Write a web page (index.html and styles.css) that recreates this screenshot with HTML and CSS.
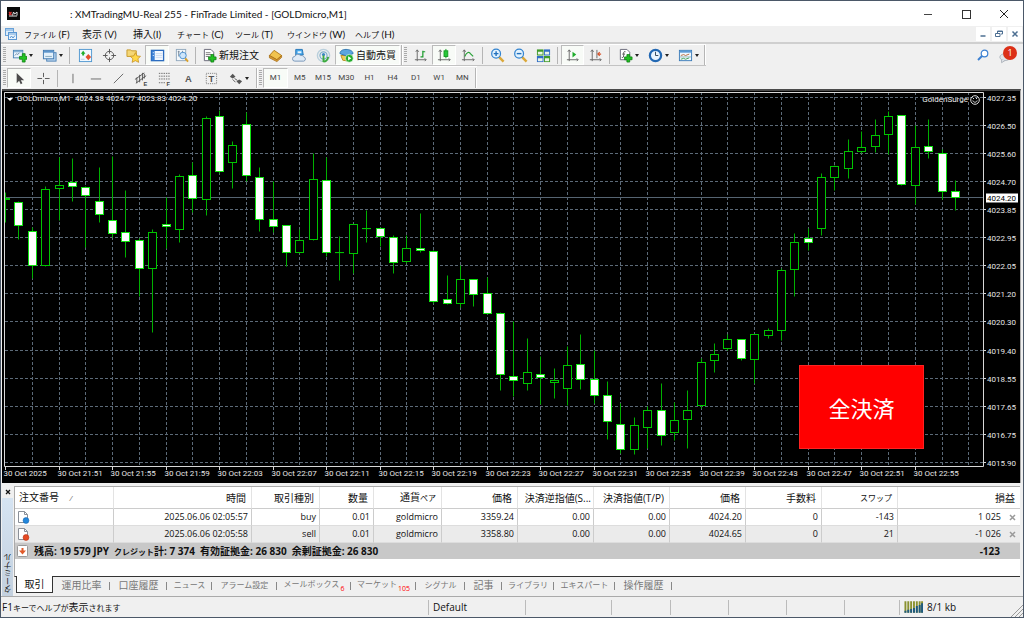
FILE: index.html
```html
<!DOCTYPE html>
<html lang="ja">
<head>
<meta charset="utf-8">
<meta name="viewport" content="width=device-width, initial-scale=1">
<title>XMTradingMU-Real 255 - FinTrade Limited - [GOLDmicro,M1]</title>
<link rel="stylesheet" href="styles.css">
</head>
<body>
<header class="titlebar">
  <svg class="logo" viewBox="0 0 13 13"><rect width="13" height="13" fill="#0a0a0a"/><path d="M2 5l2.500 3M4.500 5L2 8" stroke="#d33" stroke-width="1.200"/><path d="M5.500 8.500L6.500 5l1.200 2L10 5v3.500M2 9h8" stroke="#ddd" fill="none"/></svg>
  <h1>: XMTradingMU-Real 255 - FinTrade Limited - [GOLDmicro,M1]</h1>
  <div class="winbtns">
    <button aria-label="最小化"><svg viewBox="0 0 10 10"><path d="M1 5.500h8" stroke="#444"/></svg></button>
    <button aria-label="最大化"><svg viewBox="0 0 10 10"><rect x="1.500" y="1.500" width="8" height="8" stroke="#333" fill="none"/></svg></button>
    <button aria-label="閉じる"><svg viewBox="0 0 10 10"><path d="M1 1l8 8M9 1L1 9" stroke="#222"/></svg></button>
  </div>
</header>

<nav class="menubar">
  <svg class="doc" viewBox="0 0 12 12"><rect x=".5" y=".5" width="8" height="7" fill="#dcecfa" stroke="#6aa2d8"/><path d="M1 2h7" stroke="#6aa2d8"/><rect x="3.500" y="4.500" width="8" height="7" fill="#eaf4fd" stroke="#5b97d2"/><path d="M4 6h7" stroke="#6aa2d8"/><path d="M5 10l1.500-2 1.500 2 2-2.500" stroke="#5b97d2" fill="none"/></svg>
  <button class="m1"><span class="kana">ファイル</span> (F)</button>
  <button class="m2">表示 (V)</button>
  <button class="m3">挿入(I)</button>
  <button class="m4"><span class="kana">チャート</span> (C)</button>
  <button class="m5"><span class="kana">ツール</span> (T)</button>
  <button class="m6"><span class="kana">ウインドウ</span> (W)</button>
  <button class="m7"><span class="kana">ヘルプ</span> (H)</button>
  <div class="mdi">
    <button aria-label="チャート最小化"><svg viewBox="0 0 8 8"><path d="M1.500 6h5" stroke="#4d6f92" stroke-width="1.500"/></svg></button>
    <button aria-label="元に戻す"><svg viewBox="0 0 8 8"><path d="M2.500 3V1h5v3H6M2 1.500h5.500" stroke="#4d6f92" fill="none"/><path d="M.5 3.500h4.500v3H.5z" stroke="#4d6f92" fill="#fff"/></svg></button>
    <button aria-label="チャートを閉じる"><svg viewBox="0 0 8 8"><path d="M1.500 1.500l5 5M6.500 1.500l-5 5" stroke="#4d6f92" stroke-width="1.500"/></svg></button>
  </div>
</nav>

<div class="toolrow">
  <div class="toolbar">
    <i class="grip"></i>
    <button class="drop" aria-label="新規チャート"><svg viewBox="0 0 16 16"><rect x="1.500" y="2.500" width="10" height="8" fill="#e9f3fc" stroke="#4d86b8"/><path d="M2 4h9" stroke="#5d96c8"/><path d="M3 8l2-2 1 1 2-2" stroke="#68a" fill="none"/><path d="M8 9h3V6h3v3h2v3h-2v3h-3v-3H8z" fill="#22c322" stroke="#0b7b10" stroke-width=".8"/></svg></button>
    <button class="drop" aria-label="プロファイル"><svg viewBox="0 0 16 16"><rect x="5" y="5" width="10" height="9" fill="#b9d5ef" stroke="#4e82b5"/><rect x="1.500" y="2.500" width="11" height="9" fill="#e3f0fb" stroke="#3f78b0"/><path d="M2 4h10" stroke="#5c95cb" stroke-width="2"/><path d="M3.500 9h7" stroke="#8ab"/></svg></button>
    <i class="sep"></i>
    <button aria-label="気配値表示"><svg viewBox="0 0 16 16"><rect x="1.500" y="1.500" width="13" height="13" fill="#f2f9ff" stroke="#4f97d0"/><path d="M3 6l2.500-3L8 6 6.500 6v2h-2V6z" fill="#1fae2c"/><path d="M8 9.500l3-3 3 3-3 3.500z" fill="#e5502d"/><path d="M3 12h4" stroke="#bcd"/></svg></button>
    <button aria-label="データウインドウ"><svg viewBox="0 0 16 16"><circle cx="8" cy="8" r="4.500" fill="none" stroke="#555"/><path d="M8 1v5M8 10v5M1 8h5M10 8h5" stroke="#555"/></svg></button>
    <button aria-label="ナビゲーター"><svg viewBox="0 0 16 16"><path d="M1 2h4l1 1h5v6H1z" fill="#f5d777" stroke="#c79a2b"/><path d="M10 5l1.700 3.400 3.800.5-2.800 2.600.8 3.800L10 13.500l-3.500 1.800.8-3.800-2.800-2.600 3.800-.5z" fill="#ffd84a" stroke="#c58f1d" stroke-width=".8"/></svg></button>
    <button class="on" aria-label="ターミナル"><svg viewBox="0 0 16 16"><rect x="1.500" y="2.500" width="13" height="11" fill="#f3f8fe" stroke="#2c6cc0" stroke-width="1.400"/><path d="M2 3h3v10H2z" fill="#3b80d6"/><path d="M6 6h7M6 8h7M6 10h7" stroke="#bcd0ea" stroke-width=".7"/><path d="M3 5h1M3 8h1" stroke="#fff"/></svg></button>
    <button aria-label="ストラテジーテスター"><svg viewBox="0 0 16 16"><rect x="2.500" y="1.500" width="10" height="12" fill="#f4f8fb" stroke="#90a8bd"/><path d="M4 4h2M5 3v6M9 3v3" stroke="#789"/><circle cx="9.500" cy="8" r="3.500" fill="#cfe6fa" stroke="#4b8fcf"/><path d="M12 11l3 3.500" stroke="#d9a02b" stroke-width="2"/></svg></button>
    <i class="sep"></i>
    <button class="text order"><svg viewBox="0 0 16 16"><path d="M2.500 1.500h7l3 3v9h-10z" fill="#fff" stroke="#667"/><path d="M4 5h5M4 7h6M4 9h4" stroke="#777"/><path d="M7 9.500h2.500V7h3v2.500H15v3h-2.500V15h-3v-2.500H7z" fill="#21c021" stroke="#0b7b10" stroke-width=".8"/></svg>新規注文</button>
    <button aria-label="メタエディター"><svg viewBox="0 0 16 16"><path d="M1.500 8l5-5.500 8 5.500-5 4.500z" fill="#f1c34e" stroke="#b07a1c"/><path d="M1.500 8v2.500l8 4 5-4.500V8l-5 4.500z" fill="#d89a2e" stroke="#a46b14" stroke-width=".8"/></svg></button>
    <button aria-label="VPS"><svg viewBox="0 0 16 16"><path d="M4 1.500h7l1 6H4z" fill="#49a8ea" stroke="#2375b8"/><path d="M6 3.500h4v2H6z" fill="#e8f5ff"/><path d="M3 14a2.500 2.500 0 010-5 3.500 3.500 0 016-1 3 3 0 013.500 1.500 2.300 2.300 0 010 4.500z" fill="#dfeaf5" stroke="#7796b8"/></svg></button>
    <button aria-label="シグナル"><svg viewBox="0 0 16 16" fill="none"><circle cx="8" cy="8" r="6.500" stroke="#b9cfdc" stroke-width="1.500"/><circle cx="8" cy="8" r="3.800" stroke="#7dadcb" stroke-width="1.300"/><circle cx="8" cy="7" r="1.700" fill="#3b86c4"/><path d="M8 8v7M8 14.500c3 0 4.500-2 5-5" stroke="#3cab3d" stroke-width="2"/></svg></button>
    <button class="text auto on"><svg viewBox="0 0 16 16"><path d="M2 8l2 5 6 1 4-6z" fill="#f0cc54" stroke="#b98c22"/><path d="M1 6c0-3 3-4.500 6.500-4.500S15 3 15 6L8 8.500z" fill="#5ba5de" stroke="#2f75af"/><circle cx="11" cy="11" r="4.200" fill="#22ad2b" stroke="#fff" stroke-width=".6"/><path d="M9.700 8.800l3.500 2.200-3.500 2.200z" fill="#fff"/></svg>自動売買</button>
    <i class="edge"></i><i class="grip"></i>
    <button aria-label="バーチャート"><svg viewBox="0 0 16 16"><path d="M4.500 2v12M2 12.500h12M3 4l1.500-2L6 4M12.500 11l1.500 1.500-1.500 1.500" fill="none" stroke="#666"/><path d="M10.500 3v7M8 9.500h2.500M10.500 4H13" stroke="#1b9b2c" stroke-width="1.300"/></svg></button>
    <button class="on" aria-label="ローソク足"><svg viewBox="0 0 16 16"><path d="M3.500 2v12M1 12.500h13M2 4l1.500-2L5 4M12.500 11l1.500 1.500-1.500 1.500" fill="none" stroke="#666"/><path d="M9.500 1v10" stroke="#129b20"/><rect x="7.500" y="3" width="4" height="6" fill="#28c838" stroke="#129b20"/></svg></button>
    <button aria-label="ラインチャート"><svg viewBox="0 0 16 16"><path d="M3.500 2v12M1 12.500h13M2 4l1.500-2L5 4M12.500 11l1.500 1.500-1.500 1.500" fill="none" stroke="#666"/><path d="M4 9c2-5 5-5 6-3l3 3" fill="none" stroke="#26a035" stroke-width="1.200"/></svg></button>
    <i class="sep"></i>
    <button class="slim" aria-label="拡大"><svg viewBox="0 0 16 16"><path d="M9.500 9.500l5 5" stroke="#dba838" stroke-width="2.600"/><circle cx="6.500" cy="6" r="4.700" fill="#e3f3fe" stroke="#3183d0" stroke-width="1.300"/><path d="M4 6h5M6.500 3.500v5" stroke="#2371bd" stroke-width="1.500"/></svg></button>
    <button class="slim" aria-label="縮小"><svg viewBox="0 0 16 16"><path d="M9.500 9.500l5 5" stroke="#dba838" stroke-width="2.600"/><circle cx="6.500" cy="6" r="4.700" fill="#e3f3fe" stroke="#3183d0" stroke-width="1.300"/><path d="M4 6h5" stroke="#2371bd" stroke-width="1.500"/></svg></button>
    <button class="slim" aria-label="整列"><svg viewBox="0 0 16 16"><path d="M1 1.500h7V8H1z" fill="#3f9a28"/><path d="M8.500 1.500H15V8H8.500z" fill="#2f6cc6"/><path d="M1 8.500h7V15H1z" fill="#2f6cc6"/><path d="M8.500 8.500H15V15H8.500z" fill="#3f9a28"/><path d="M2 4h5v3H2zM9.500 4H14v3H9.500zM2 11h5v3H2zM9.500 11H14v3H9.500z" fill="#eaf5e8"/></svg></button>
    <i class="sep"></i>
    <button class="slim on" aria-label="自動スクロール"><svg viewBox="0 0 16 16"><path d="M4.500 2v12M2 12.500h12M3 4l1.500-2L6 4M12.500 11l1.500 1.500-1.500 1.500" fill="none" stroke="#666"/><path d="M8 4l4 3-4 3z" fill="#1ead2c"/></svg></button>
    <button class="slim" aria-label="チャートシフト"><svg viewBox="0 0 16 16"><path d="M4.500 2v12M2 12.500h12M3 4l1.500-2L6 4M12.500 11l1.500 1.500-1.500 1.500M9.500 2v9" fill="none" stroke="#666"/><path d="M14 6.500h-3M12.500 4.500l-2 2 2 2" stroke="#d6532b" fill="none" stroke-width="1.200"/></svg></button>
    <i class="sep"></i>
    <button class="drop" aria-label="インディケータ"><svg viewBox="0 0 16 16"><path d="M2.500 1.500h7l3 3v8h-10z" fill="#fff" stroke="#667"/><path d="M8 4c-2-1-2 1-2 3s0 4-2 3M4.500 6.500h3" stroke="#555" fill="none"/><path d="M7 9.500h2.500V7h3v2.500H15v3h-2.500V15h-3v-2.500H7z" fill="#21c021" stroke="#0b7b10" stroke-width=".8"/></svg></button>
    <button class="drop" aria-label="時間足"><svg viewBox="0 0 16 16"><circle cx="8" cy="8" r="6" fill="#eaf5ff" stroke="#2268b3" stroke-width="2.400"/><path d="M8 4v4h3" stroke="#345" fill="none"/></svg></button>
    <button class="drop" aria-label="定型チャート"><svg viewBox="0 0 16 16"><rect x="1.500" y="2.500" width="13" height="11" fill="#f2f9ff" stroke="#3c7cb9"/><path d="M2 4h12" stroke="#5d9bd6" stroke-width="2"/><path d="M3 8l3-1 2 1 4-1.500" stroke="#b5683b" fill="none"/><path d="M2 9.500h12" stroke="#9bb"/><path d="M3 12l3-1 2 1 4-1.500" stroke="#41a054" fill="none"/></svg></button>
    <i class="edge"></i>
  </div>
  <div class="right">
    <button aria-label="検索"><svg viewBox="0 0 12 12"><circle cx="7.500" cy="4.500" r="3.300" fill="#fff" stroke="#3c80d2" stroke-width="1.200"/><path d="M5 7l-4 4" stroke="#3c80d2" stroke-width="2"/></svg></button>
    <button class="alerts" aria-label="通知"><svg viewBox="0 0 14 12"><ellipse cx="7" cy="5" rx="6" ry="4" fill="#e2e6ea" stroke="#a9b0b8"/><path d="M3 8v3.500L7 9" fill="#e2e6ea" stroke="#a9b0b8"/></svg><span class="badge">1</span></button>
  </div>
</div>

<div class="toolrow second">
  <div class="toolbar">
    <i class="grip"></i>
    <button class="on" aria-label="カーソル"><svg viewBox="0 0 16 16"><path d="M5 2v11l2.600-2.500L9.300 14l1.800-.9-1.700-3.300H13z" fill="#4c4c4c"/></svg></button>
    <button aria-label="十字カーソル"><svg viewBox="0 0 16 16"><path d="M8 2v4.500M8 9.500V14M1.500 8h5M9.500 8h5" stroke="#555"/></svg></button>
    <i class="sep"></i>
    <button class="slim" aria-label="垂直線"><svg viewBox="0 0 16 16"><path d="M8.500 3v10" stroke="#666"/></svg></button>
    <button class="slim" aria-label="水平線"><svg viewBox="0 0 16 16"><path d="M3 8.500h11" stroke="#666"/></svg></button>
    <button class="slim" aria-label="トレンドライン"><svg viewBox="0 0 16 16"><path d="M3 13L13 3" stroke="#666"/></svg></button>
    <button class="slim" aria-label="チャネル"><svg viewBox="0 0 16 16"><path d="M1 9L11 2M2 13L13 5M3 7v6M6 4v8M9 2v8M11 3v5" stroke="#555"/><text x="10" y="16" class="tag">E</text></svg></button>
    <button class="slim" aria-label="フィボナッチ"><svg viewBox="0 0 16 16"><path d="M2 2.500h12M2 5.500h12M2 8.500h12M2 12.500h7" stroke="#666" stroke-dasharray="1.500 1"/><text x="10" y="16" class="tag">F</text></svg></button>
    <button class="slim" aria-label="テキスト"><svg viewBox="0 0 16 16"><text x="9" y="12" class="letter">A</text></svg></button>
    <button class="slim" aria-label="テキストラベル"><svg viewBox="0 0 16 16"><rect x="3.500" y="2.500" width="11" height="11" fill="none" stroke="#777" stroke-dasharray="1 1"/><text x="9" y="12" class="letter">T</text></svg></button>
    <button class="drop wide" aria-label="矢印"><svg viewBox="0 0 16 16"><path d="M2 6l3-3 3 3-3 2z" fill="#555"/><path d="M5 9l3 3M7 8l3 2" stroke="#555"/><path d="M9 11l3 3 3-3-3-2z" fill="#555"/></svg></button>
    <i class="edge"></i><i class="grip"></i>
    <div class="frames"><button class="on">M1</button><button>M5</button><button>M15</button><button>M30</button><button>H1</button><button>H4</button><button>D1</button><button>W1</button><button>MN</button></div>
    <i class="edge"></i>
  </div>
</div>

<main class="chart">
  <svg id="plot" role="img" aria-label="GOLDmicro M1"></svg>
  <div class="symbol"><svg viewBox="0 0 8 5"><path d="M1 1h6L4 4z" fill="#fff"/></svg><span>GOLDmicro,M1&nbsp; 4024.38 4024.77 4023.83 4024.20</span></div>
  <div class="expert">GoldenSurge<svg viewBox="0 0 10 10" fill="none" stroke="#ddd"><circle cx="5" cy="5" r="4.300"/><path d="M2.800 5.500c.5 2.300 3.900 2.300 4.400 0M3.500 3v1M6.500 3v1"/></svg></div>
  <button class="closeall">全決済</button>
</main>

<section class="terminal">
  <aside class="side"><button aria-label="ターミナルを閉じる"><svg viewBox="0 0 6 6"><path d="M1 1l4 4M5 1L1 5" stroke="#111" stroke-width="1.300"/></svg></button><span>ターミナル</span></aside>
  <div class="panel">
    <div class="sheet">
      <table>
        <colgroup><col class="c99"><col class="c138"><col class="c68"><col class="c54"><col class="c68"><col class="c76"><col class="c76"><col class="c76"><col class="c76"><col class="c76"><col class="c76"><col></colgroup>
        <thead><tr><th class="first">注文番号 <i>/</i></th><th>時間</th><th>取引種別</th><th>数量</th><th>通貨<span class="kana">ペア</span></th><th>価格</th><th>決済逆指値(S...</th><th>決済指値(T/P)</th><th>価格</th><th>手数料</th><th><span class="kana">スワップ</span></th><th>損益</th></tr></thead>
        <tbody>
          <tr><td class="first"><svg class="file" viewBox="0 0 13 13"><path d="M1.500.5h6l3 3v8h-9z" fill="#fff" stroke="#8a9099"/><path d="M7.500.5v3h3" fill="none" stroke="#8a9099"/><circle cx="9" cy="9.500" r="2.900" fill="#2287dc" stroke="#1668b3" stroke-width=".6"/></svg></td><td>2025.06.06 02:05:57</td><td>buy</td><td>0.01</td><td>goldmicro</td><td>3359.24</td><td>0.00</td><td>0.00</td><td>4024.20</td><td>0</td><td>-143</td><td>1 025<button class="x" aria-label="決済"><svg viewBox="0 0 7 7"><path d="M1 1l5 5M6 1L1 6" stroke="#999" stroke-width="1.500"/></svg></button></td></tr>
          <tr class="alt"><td class="first"><svg class="file" viewBox="0 0 13 13"><path d="M1.500.5h6l3 3v8h-9z" fill="#fff" stroke="#8a9099"/><path d="M7.500.5v3h3" fill="none" stroke="#8a9099"/><circle cx="9" cy="9.500" r="2.900" fill="#e44a24" stroke="#b93012" stroke-width=".6"/></svg></td><td>2025.06.06 02:05:58</td><td>sell</td><td>0.01</td><td>goldmicro</td><td>3358.80</td><td>0.00</td><td>0.00</td><td>4024.65</td><td>0</td><td>21</td><td>-1 026<button class="x" aria-label="決済"><svg viewBox="0 0 7 7"><path d="M1 1l5 5M6 1L1 6" stroke="#999" stroke-width="1.500"/></svg></button></td></tr>
        </tbody>
        <tfoot><tr><td colspan="11" class="first"><div class="balance"><svg viewBox="0 0 12 12"><rect x=".5" y=".5" width="10" height="11" rx="1" fill="#fff" stroke="#999"/><path d="M4.500 3h2v2.500H9L5.500 9.500 2 5.500h2.500z" fill="#e05a2a"/></svg><span>残高: 19 579 JPY</span><span><span class="kana">クレジット</span>計: 7 374</span><span>有効証拠金: 26 830</span><span>余剰証拠金: 26 830</span></div></td><td class="total">-123</td></tr></tfoot>
      </table>
    </div>
    <div class="tabs" role="tablist">
      <button class="tab active" role="tab" aria-selected="true">取引</button>
      <button class="tab w57" role="tab">運用比率</button>
      <button class="tab w57" role="tab">口座履歴</button>
      <button class="tab w45 kana" role="tab">ニュース</button>
      <button class="tab w65 kana" role="tab">アラーム設定</button>
      <button class="tab w74 kana" role="tab">メールボックス<sub>6</sub></button>
      <button class="tab w65 kana" role="tab">マーケット<sub>105</sub></button>
      <button class="tab w49 kana" role="tab">シグナル</button>
      <button class="tab w37" role="tab">記事</button>
      <button class="tab w52 kana" role="tab">ライブラリ</button>
      <button class="tab w61 kana" role="tab">エキスパート</button>
      <button class="tab w57" role="tab">操作履歴</button>
    </div>
  </div>
</section>

<footer class="status">
  <span class="help">F1<span class="kana">キーでヘルプが</span>表示<span class="kana">されます</span></span>
  <span class="cell profile">Default</span><span class="cell a"></span><span class="cell b"></span><span class="cell c"></span><span class="cell c"></span><span class="cell c"></span><span class="cell d"></span>
  <span class="cell net"><svg viewBox="0 0 20 12"><path d="M1.500 0v12M4.500 0v12M7.500 0v12M10.500 0v12M13.500 0v12M16.500 0v12M19 0v12" stroke="#8a9230" stroke-width="2"/><path d="M1.500 10v2M4.500 9v3M7.500 8v4M10.500 7v5M13.500 5v7M16.500 4v8M19 2v10" stroke="#1d5a82" stroke-width="2"/></svg>8/1 kb</span>
  <svg class="resize" viewBox="0 0 12 12"><path d="M0 12L12 0M4 12l8-8M8 12l4-4" stroke="#999"/></svg>
</footer>
<script src="chart.js"></script>
</body>
</html>
```
FILE: styles.css
```css
* { box-sizing: border-box; }
body {
  margin: 0; height: 100vh; min-height: 400px; overflow: hidden;
  display: flex; flex-direction: column;
  border: 1px solid #4b5868; background: #f0f0f0; color: #111;
  font: 10px/12px "Open Sans", "Noto Sans CJK JP", sans-serif;
}
button { border: 0; padding: 0; margin: 0; background: none; font: inherit; color: inherit; white-space: nowrap; }
svg { display: block; }
.kana { font-size: 8px; }

.titlebar { display: flex; align-items: center; height: 25px; padding-left: 6px; background: #fff; flex: none; }
.logo { width: 13px; height: 13px; }
.titlebar h1 { margin: 0 0 0 50px; font: 10px/14px Lato, sans-serif; white-space: nowrap; }
.winbtns { display: flex; margin-left: auto; }
.winbtns button { width: 38px; height: 24px; display: grid; place-items: center; }
.winbtns svg { width: 10px; height: 10px; }

.menubar { display: flex; align-items: center; height: 18px; padding-left: 4px; border-bottom: 2px solid #cfcfcf; flex: none; }
.menubar .doc { width: 12px; height: 12px; margin-right: 7px; }
.menubar > button { text-align: left; font-family: Lato, "Noto Sans CJK JP", sans-serif; }
.m1 { width: 58px; } .m2 { width: 51px; } .m3 { width: 44px; } .m4 { width: 58px; }
.m5 { width: 52px; } .m6 { width: 68px; }
.mdi { display: flex; gap: 2px; margin-left: auto; padding-right: 1px; }
.mdi button { width: 14px; height: 14px; display: grid; place-items: center; background: #fff; }
.mdi svg { width: 8px; height: 8px; }

.toolrow { display: flex; height: 22px; flex: none; }
.toolrow.second { height: 23px; }
.toolbar { display: flex; align-items: center; padding-left: 1px; border-top: 1px solid #fff; border-bottom: 1px solid #c3c3c3; }
.second .toolbar { border-bottom: 0; }
.toolbar button { width: 24px; height: 20px; display: flex; align-items: center; justify-content: center; flex: none; }
.toolbar svg { width: 15px; height: 15px; flex: none; }
.toolbar .on { background: #f8fbf7; border: 1px solid #fff; border-top-color: #bbb; border-left-color: #bbb; }
.toolbar .slim { width: 23px; }
.toolbar .drop { width: 30px; gap: 2px; }
.toolbar .wide { width: 33px; }
.drop::after { content: ""; border: 2px solid transparent; border-top: 3px solid #222; border-bottom: 0; }
.toolbar .text { width: auto; gap: 2px; padding: 0 3px; }
.toolbar .order { padding: 0 4px 0 3px; }
.frames { display: flex; width: 211px; }
.toolbar .frames button { flex: 1; font: 8px/12px Roboto, sans-serif; color: #444; }
.grip { width: 3px; height: 16px; margin: 0 1px; background: repeating-linear-gradient(#aaa 0 1px, #f0f0f0 1px 2px); }
.sep { width: 1px; height: 17px; margin: 0 3px 0 2px; background: #b5b5b5; }
.edge { width: 2px; height: 20px; margin-left: 1px; border-left: 1px solid #b5b5b5; border-right: 1px solid #fff; }
.letter { font: bold 10px "Liberation Sans", sans-serif; fill: #555; text-anchor: middle; }
.tag { font: bold 6px "Liberation Sans", sans-serif; fill: #444; }
.right { margin-left: auto; display: flex; align-items: center; gap: 10px; padding-right: 12px; }
.right button svg { width: 12px; height: 12px; }
.alerts { position: relative; }
.alerts svg { margin-top: 6px; }
.badge { position: absolute; left: 4px; top: 0; width: 14px; height: 14px; border-radius: 7px; background: #dc3017; color: #fff; font: 9px/14px "Open Sans", sans-serif; }

.chart { position: relative; flex: 1; min-height: 0; margin: 0 2px 0 1px; border-top: 2px solid #4a4a4a; border-right: 1px solid #aaa; background: #000; }
#plot { position: absolute; inset: 0; width: 100%; height: 100%; }
#plot text { font: 8px Roboto, sans-serif; fill: #e6e6e6; }
#plot .now { fill: #000; }
.grid { stroke: #5c6a78; stroke-dasharray: 3 2; fill: none; }
.frame { stroke: #d8d8d8; fill: none; }
.wick { stroke: #00b000; }
.up { fill: #000; stroke: #00c400; }
.down { fill: #fff; stroke: #10e410; }
.symbol, .expert { position: absolute; top: 2px; display: flex; align-items: center; gap: 3px; color: #eee; font: 8px/12px Roboto, sans-serif; white-space: nowrap; }
.symbol { left: 4px; }
.symbol svg { width: 8px; height: 5px; }
.expert { right: 40px; top: 3px; gap: 2px; }
.expert svg { width: 10px; height: 10px; }
.closeall { position: absolute; right: 96px; bottom: 34px; width: 125px; height: 84px; background: #f00; border: 1px solid #f22; color: #fff; font: 22px/30px "Noto Sans CJK JP", sans-serif; }

.terminal { display: flex; flex: none; padding-top: 3px; background: #f0f0f0; }
.side { width: 13px; display: flex; flex-direction: column; align-items: center; gap: 3px; padding-top: 3px; }
.side svg { width: 6px; height: 6px; }
.side span { flex: 1; width: 11px; writing-mode: vertical-rl; transform: rotate(180deg); background: linear-gradient(#c3d0de, #d6e4f2); text-align: left; font-size: 8px; line-height: 11px; padding-top: 3px; }
.panel { flex: 1; min-width: 0; margin-right: 3px; }
.sheet { height: 91px; background: #fff; border-top: 1px solid #aaa; border-left: 1px solid #aaa; border-bottom: 1px solid #333; }
table { width: 100%; table-layout: fixed; border-collapse: separate; border-spacing: 0; }
.c99 { width: 99px; } .c138 { width: 138px; } .c68 { width: 68px; } .c54 { width: 54px; } .c76 { width: 76px; }
th, td { padding: 0 3px; text-align: right; white-space: nowrap; font-weight: 400; line-height: 12px; }
th { height: 22px; padding-right: 5px; border-right: 1px solid #e3e3e3; border-bottom: 1px solid #ccc; }
th:nth-child(7) { padding: 0 2px; }
td { height: 17px; border-right: 1px solid #ccc; border-bottom: 1px solid #ddd; font-size: 9px; }
th:last-child, td:last-child { border-right: 0; }
th.first, td.first { text-align: left; padding-left: 4px; }
td.first { padding-left: 2px; }
th.first i { color: #777; font-size: 8px; margin-left: 8px; }
.alt td { background: #ebebeb; }
tfoot td { background: #c8c8c8; border: 0; font-weight: 700; height: 16px; font-size: 10px; }
.balance { display: flex; align-items: center; gap: 5px; }
.balance svg { width: 12px; height: 12px; }
.file { width: 13px; height: 13px; }
.x { margin: 0 1px 0 8px; vertical-align: middle; }
.x svg { width: 7px; height: 7px; }
td.total { padding-right: 20px; }

.tabs { display: flex; height: 19px; padding-left: 2px; color: #777; }
.tab { position: relative; height: 16px; flex: none; }
.tab:not(.active)::after { content: ""; position: absolute; right: 0; top: 5px; height: 8px; border-right: 1px solid #888; }
.tab.active { width: 37px; height: 17px; margin-top: -1px; background: #fff; color: #111; border: 1px solid #333; border-top: 0; }
.tab sub { color: #f00; font-size: 7px; line-height: 7px; vertical-align: -4px; margin-left: 1px; }
.w57 { width: 57px; } .w45 { width: 45px; } .w65 { width: 65px; } .w74 { width: 74px; } .w49 { width: 49px; }
.w37 { width: 37px; } .w52 { width: 52px; } .w61 { width: 61px; }

.status { display: flex; align-items: center; height: 21px; flex: none; border-top: 1px solid #aaa; }
.help { flex: 1; padding-left: 1px; }
.cell { height: 15px; line-height: 15px; border-left: 1px solid #bbb; padding-left: 4px; }
.profile { width: 97px; } .a { width: 86px; } .b { width: 59px; } .c { width: 58px; } .d { width: 55px; }
.net { width: 112px; display: flex; align-items: center; gap: 4px; }
.net svg { width: 19px; height: 12px; }
.resize { width: 12px; height: 12px; align-self: flex-end; }
```
FILE: chart.js
```js
// Each bar: high, body top, body bottom, low, direction (1 = falling, 0 = rising).
const bars = [
  [192,198,200,222,0],
  [201,202,226,239,1],[227,231,266,278,1],[186,189,266,266,0],[157,185,189,220,0],[158,182,187,201,1],
  [186,187,196,247,1],[167,201,215,222,1],[156,220,234,237,1],[190,232,242,257,1],[238,240,269,297,1],
  [229,232,269,333,0],[197,224,227,248,1],[174,176,230,242,0],[162,175,199,212,1],[116,118,200,215,0],
  [110,116,172,173,1],[141,145,163,188,0],[112,124,176,181,1],[167,177,220,231,1],[181,219,227,232,1],
  [225,225,253,266,1],[229,240,253,253,0],[153,179,240,240,0],[157,180,253,256,1],[236,252,252,281,0],
  [224,224,254,273,0],[210,228,228,242,0],[227,228,237,246,1],[235,237,263,273,1],[235,248,262,263,0],
  [213,248,251,252,1],[250,251,303,304,1],[275,300,305,305,1],[265,279,305,308,0],[279,279,296,307,1],
  [277,294,315,315,1],[313,314,376,391,1],[322,377,382,397,1],[339,373,385,391,0],[357,375,379,405,1],
  [369,381,384,399,0],[347,366,390,406,0],[335,365,381,390,1],[351,380,397,404,1],[382,396,423,440,1],
  [404,425,451,454,1],[418,426,451,455,0],[407,411,429,449,0],[384,411,437,446,1],[403,421,434,441,0],
  [391,411,421,449,0],[359,363,407,409,0],[344,355,362,373,0],[335,340,350,351,0],[340,340,360,361,1],
  [335,335,361,384,0],[329,331,337,339,0],[268,270,332,341,0],[233,242,270,297,0],[228,238,243,250,1],
  [173,177,229,235,0],[165,166,178,190,0],[139,151,169,178,0],[131,147,152,153,0],[119,135,147,152,0],
  [111,116,135,154,0],[115,115,185,185,1],[125,147,186,204,0],[119,146,152,158,1],[149,153,192,199,1],
  [180,191,198,210,1]
];
const prices = ["4027.35","4026.50","4025.60","4024.70","4023.85","4022.95","4022.05","4021.20","4020.30","4019.40","4018.55","4017.65","4016.75","4015.90"];
const times = ["2025","21:51","21:55","21:59","22:03","22:07","22:11","22:15","22:19","22:23","22:27","22:31","22:35","22:39","22:43","22:47","22:51","22:55"];
const plot = document.getElementById("plot");

function draw() {
  const w = plot.clientWidth, h = plot.clientHeight;
  const right = w - 37, bottom = h - 17, top = 1;
  const x = i => Math.round(3 + i * (right - 3) / 73.1) + 0.5;
  const y = v => Math.round(top + (v - 92) * (bottom - top) / 375) + 0.5;
  const gridY = i => y(97.3 + i * 28.1);
  let s = "";
  for (let i = 2; i < 73; i += 2) s += `<path class="grid" d="M${x(i)} ${top}V${bottom}"/>`;
  prices.forEach((p, i) => {
    s += `<path class="grid" d="M3 ${gridY(i)}H${right}"/><path class="frame" d="M${right} ${gridY(i)}h3"/><text x="${right + 4}" y="${gridY(i) + 3}">${p}</text>`;
  });
  s += `<path d="M3 ${y(197.7)}H${right}" stroke="#566472"/>`;
  bars.forEach((b, i) => {
    const c = x(i);
    s += `<path class="wick" d="M${c} ${y(b[0])}V${y(b[3])}"/>`;
    s += `<rect class="${b[4] ? "down" : "up"}" x="${c - 4}" y="${y(b[1])}" width="8" height="${Math.max(y(b[2]) - y(b[1]) - 1, 0.1)}"/>`;
  });
  s += `<rect width="2.500" height="${h}"/>`;
  s += `<path class="frame" d="M2.500 ${bottom + 0.5}V${top + 0.5}H${right + 0.5}V${bottom + 0.5}H2.500"/>`;
  times.forEach((t, i) => {
    s += `<path class="frame" d="M${x(i * 4)} ${bottom}v4"/><text x="${x(i * 4) - 2}" y="${bottom + 10}">30 Oct ${t}</text>`;
  });
  s += `<rect x="${right + 3}" y="${y(193)}" width="32" height="9" fill="#fff"/><text class="now" x="${right + 4}" y="${y(197.7) + 3}">4024.20</text>`;
  plot.innerHTML = s;
}
draw();
window.addEventListener("resize", draw);
```
